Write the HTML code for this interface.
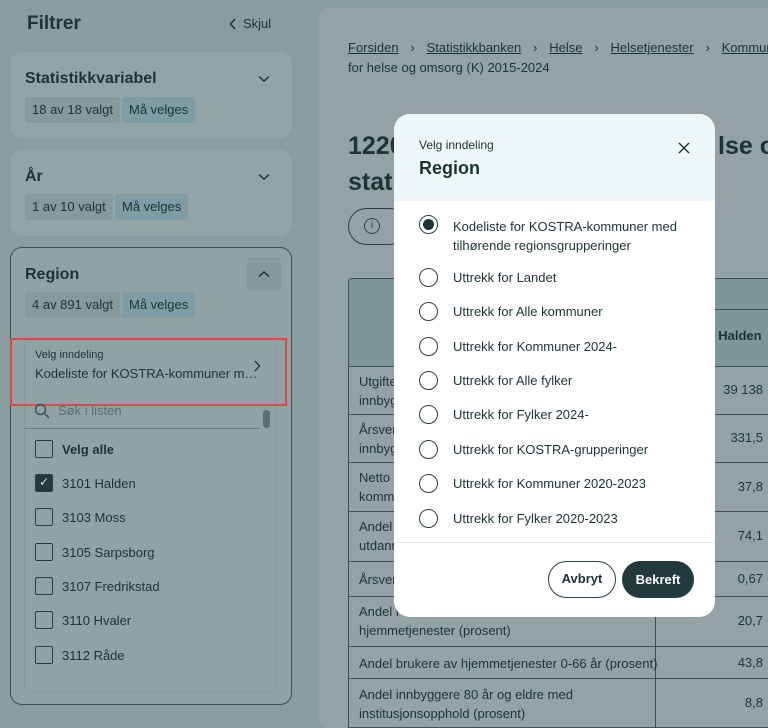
<!DOCTYPE html>
<html><head><meta charset="utf-8"><style>
*{box-sizing:border-box;margin:0;padding:0}
body{width:768px;height:714px;overflow:hidden;background:#8a9c9e;font-family:"Liberation Sans",sans-serif;color:#1d3336;position:relative}
.a{position:absolute;white-space:nowrap}
.card{position:absolute;left:10px;width:282px;background:#93a4a6;border-radius:12px}
.tag{position:absolute;height:26px;line-height:26px;font-size:13px;padding:0 7px;border-radius:3px;background:#86999b}
.tag.b{background:#7f9ca5}
.h{font-weight:bold;font-size:16px}
.cb{position:absolute;left:35px;width:18px;height:18px;border:1.5px solid #2c3f41;border-radius:2px}
.li{position:absolute;left:62px;font-size:13px}
.tbl{position:absolute;left:348px;top:278px;width:430px;height:450px;border:1px solid #3d5052;border-radius:4px 0 0 0;background:#93a3a5;overflow:hidden}
.row{position:absolute;left:0;width:430px;border-top:1px solid #3d5052;font-size:13px}
.row .t{position:absolute;left:10px;line-height:19px}
.row .v{position:absolute;left:360px;width:54px;text-align:right;}
.modal{position:absolute;left:394px;top:114px;width:321px;height:503px;background:#fff;border-radius:16px;overflow:hidden}
.rd{position:absolute;left:25px;width:19px;height:19px;border:1.5px solid #2c3f41;border-radius:50%}
.rt{position:absolute;left:59px;font-size:13px;color:#1d3336}
.sep{display:inline-block;width:28px;text-align:center}
</style></head><body>
<div class="a" style="left:27px;top:13px;font-size:19px;font-weight:bold">Filtrer</div>
<svg class="a" style="left:229px;top:18px" width="8" height="12"><path d="M6 1 L1.5 6 L6 11" fill="none" stroke="#1d3336" stroke-width="1.5"/></svg>
<div class="a" style="left:243px;top:16px;font-size:13px">Skjul</div>

<div class="card" style="top:52px;height:86px"></div>
<div class="a h" style="left:25px;top:70px">Statistikkvariabel</div>
<svg class="a" style="left:258px;top:75px" width="12" height="8"><path d="M1 1.5 L6 6 L11 1.5" fill="none" stroke="#1d3336" stroke-width="1.4"/></svg>
<div class="tag" style="left:25px;top:97px">18 av 18 valgt</div>
<div class="tag b" style="left:122px;top:97px">Må velges</div>

<div class="card" style="top:150px;height:86px"></div>
<div class="a h" style="left:25px;top:168px">År</div>
<svg class="a" style="left:258px;top:173px" width="12" height="8"><path d="M1 1.5 L6 6 L11 1.5" fill="none" stroke="#1d3336" stroke-width="1.4"/></svg>
<div class="tag" style="left:25px;top:194px">1 av 10 valgt</div>
<div class="tag b" style="left:115px;top:194px">Må velges</div>

<div class="card" style="top:247px;height:458px;border:1px solid #3d5052;background:#91a2a4"></div>
<div class="a h" style="left:25px;top:266px">Region</div>
<div class="a" style="left:247px;top:257px;width:34px;height:34px;border-radius:5px;background:#86999b"></div>
<svg class="a" style="left:258px;top:270px" width="12" height="8"><path d="M1 6.5 L6 2 L11 6.5" fill="none" stroke="#1d3336" stroke-width="1.4"/></svg>
<div class="tag" style="left:25px;top:292px">4 av 891 valgt</div>
<div class="tag b" style="left:122px;top:292px">Må velges</div>
<div class="a" style="left:24px;top:340px;width:252px;height:352px;border:1px solid #86999b;border-radius:4px"></div>
<div class="a" style="left:35px;top:349px;font-size:11px">Velg inndeling</div>
<div class="a" style="left:35px;top:366px;font-size:13px">Kodeliste for KOSTRA-kommuner m…</div>
<svg class="a" style="left:253px;top:360px" width="8" height="12"><path d="M2 1 L6.5 6 L2 11" fill="none" stroke="#1d3336" stroke-width="1.3"/></svg>
<div class="a" style="left:10px;top:338px;width:277px;height:68px;border:2px solid #e04848"></div>
<svg class="a" style="left:34px;top:403px" width="16" height="16"><circle cx="6.5" cy="6.5" r="5" fill="none" stroke="#3d5052" stroke-width="1.4"/><path d="M10 10 L15 15" stroke="#3d5052" stroke-width="1.4"/></svg>
<div class="a" style="left:58px;top:403px;font-size:13px;color:#5b6c6e">Søk i listen</div>
<div class="a" style="left:24px;top:428px;width:236px;border-top:1px solid #6e8284"></div>
<div class="a" style="left:263px;top:410px;width:7px;height:18px;background:#5d6e70;border-radius:4px"></div>
<div class="cb" style="top:440px"></div><div class="li" style="top:442px;font-weight:bold">Velg alle</div>
<div class="cb" style="top:474px;background:#223a3d;color:#ddd;font-size:12px;text-align:center;line-height:15px">✓</div><div class="li" style="top:476px">3101 Halden</div>
<div class="cb" style="top:508px"></div><div class="li" style="top:510px">3103 Moss</div>
<div class="cb" style="top:543px"></div><div class="li" style="top:545px">3105 Sarpsborg</div>
<div class="cb" style="top:577px"></div><div class="li" style="top:579px">3107 Fredrikstad</div>
<div class="cb" style="top:611px"></div><div class="li" style="top:613px">3110 Hvaler</div>
<div class="cb" style="top:646px"></div><div class="li" style="top:648px">3112 Råde</div>

<div class="a" style="left:318px;top:8px;width:460px;height:720px;background:#93a3a5;border-radius:12px"></div>
<div class="a" style="left:348px;top:40px;font-size:13px"><u>Forsiden</u><span class="sep">›</span><u>Statistikkbanken</u><span class="sep">›</span><u>Helse</u><span class="sep">›</span><u>Helsetjenester</u><span class="sep">›</span><u>Kommune</u></div>
<div class="a" style="left:348px;top:60px;font-size:13px">for helse og omsorg (K) 2015-2024</div>
<div class="a" style="left:348px;top:128px;font-size:25px;font-weight:bold;line-height:36px">1220<br>stati</div>
<div class="a" style="left:718px;top:128px;font-size:25px;font-weight:bold;line-height:36px">lse o</div>
<div class="a" style="left:348px;top:208px;width:60px;height:37px;border:1.5px solid #2c3f41;border-radius:19px"></div>
<div class="a" style="left:364px;top:218px;width:16px;height:16px;border:1.3px solid #2c3f41;border-radius:50%;font-size:10px;text-align:center;line-height:14px">i</div>

<div class="tbl">
 <div class="a" style="left:0;top:0;width:430px;height:87px;background:#7f9697"></div>
 <div class="a" style="left:306px;top:30px;width:124px;border-top:1px solid #3d5052"></div>
 <div class="a" style="left:306px;top:30px;height:420px;border-left:1px solid #3d5052"></div>
 <div class="a" style="left:362px;top:49px;font-size:13px;font-weight:bold">l Halden</div>
 <div class="row" style="top:87px;height:48px"><div class="t" style="top:5px">Utgifte<br>innbyg</div><div class="v" style="top:15px">39 138</div></div>
 <div class="row" style="top:135px;height:48px"><div class="t" style="top:5px">Årsver<br>innbyg</div><div class="v" style="top:15px">331,5</div></div>
 <div class="row" style="top:183px;height:49px"><div class="t" style="top:5px">Netto<br>komm</div><div class="v" style="top:16px">37,8</div></div>
 <div class="row" style="top:232px;height:50px"><div class="t" style="top:5px">Andel<br>utdann</div><div class="v" style="top:16px">74,1</div></div>
 <div class="row" style="top:282px;height:35px"><div class="t" style="top:8px">Årsver</div><div class="v" style="top:9px">0,67</div></div>
 <div class="row" style="top:317px;height:50px"><div class="t" style="top:5px">Andel i<br>hjemmetjenester (prosent)</div><div class="v" style="top:16px">20,7</div></div>
 <div class="row" style="top:367px;height:32px"><div class="t" style="top:7px">Andel brukere av hjemmetjenester 0-66 år (prosent)</div><div class="v" style="top:8px">43,8</div></div>
 <div class="row" style="top:399px;height:60px"><div class="t" style="top:6px">Andel innbyggere 80 år og eldre med<br>institusjonsopphold (prosent)</div><div class="v" style="top:16px">8,8</div></div>
</div>

<div class="modal">
 <div class="a" style="left:0;top:0;width:321px;height:87px;background:#eef7f7"></div>
 <div class="a" style="left:25px;top:24px;font-size:12px">Velg inndeling</div>
 <div class="a" style="left:25px;top:44px;font-size:18px;font-weight:bold">Region</div>
 <svg class="a" style="left:284px;top:28px" width="12" height="12"><path d="M1 1 L11 11 M11 1 L1 11" stroke="#1d3336" stroke-width="1.4"/></svg>
 <div class="rd" style="top:101px"><div style="margin:2.5px;width:11px;height:11px;border-radius:50%;background:#1f3336"></div></div>
 <div class="rt" style="top:103px;line-height:19px">Kodeliste for KOSTRA-kommuner med<br>tilhørende regionsgrupperinger</div>
 <div class="rd" style="top:154px"></div><div class="rt" style="top:156px">Uttrekk for Landet</div>
 <div class="rd" style="top:188px"></div><div class="rt" style="top:190px">Uttrekk for Alle kommuner</div>
 <div class="rd" style="top:223px"></div><div class="rt" style="top:225px">Uttrekk for Kommuner 2024-</div>
 <div class="rd" style="top:257px"></div><div class="rt" style="top:259px">Uttrekk for Alle fylker</div>
 <div class="rd" style="top:291px"></div><div class="rt" style="top:293px">Uttrekk for Fylker 2024-</div>
 <div class="rd" style="top:326px"></div><div class="rt" style="top:328px">Uttrekk for KOSTRA-grupperinger</div>
 <div class="rd" style="top:360px"></div><div class="rt" style="top:362px">Uttrekk for Kommuner 2020-2023</div>
 <div class="rd" style="top:395px"></div><div class="rt" style="top:397px">Uttrekk for Fylker 2020-2023</div>
 <div class="a" style="left:0;top:428px;width:321px;border-top:1px solid #e0eced"></div>
 <div class="a" style="left:154px;top:447px;width:68px;height:37px;border:1.5px solid #2c3f41;border-radius:19px;text-align:center;line-height:34px;font-size:13px;font-weight:bold">Avbryt</div>
 <div class="a" style="left:228px;top:447px;width:72px;height:37px;background:#223a3d;color:#fff;border-radius:19px;text-align:center;line-height:37px;font-size:13px;font-weight:bold">Bekreft</div>
</div>
</body></html>
